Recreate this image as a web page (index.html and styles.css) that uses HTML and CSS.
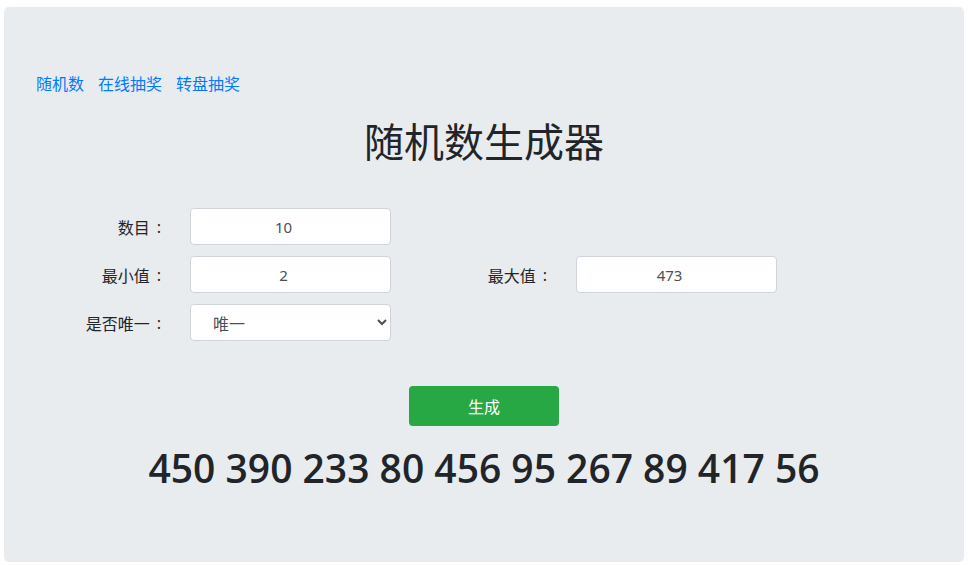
FILE: index.html
```html
<!DOCTYPE html>
<html>
<head>
	<title>随机数生成器</title>
	<link rel="stylesheet" href="styles.css">
</head>
<body>
	<div class="jumbotron">
		<nav class="links">
			<a href="#">随机数</a>
			<a href="#">在线抽奖</a>
			<a href="#">转盘抽奖</a>
		</nav>
		<h1>随机数生成器</h1>
		<form class="form">
			<label class="label" for="count">数目<span class="colon">:</span></label>
			<input class="field" id="count" type="text" value="10">
			<span></span><span></span>

			<label class="label" for="min">最小值<span class="colon">:</span></label>
			<input class="field" id="min" type="text" value="2">
			<label class="label" for="max">最大值<span class="colon">:</span></label>
			<input class="field" id="max" type="text" value="473">

			<label class="label" for="unique">是否唯一<span class="colon">:</span></label>
			<select class="field select" id="unique">
				<option>唯一</option>
				<option>不唯一</option>
			</select>
		</form>
		<div class="actions">
			<button class="btn" type="button">生成</button>
		</div>
		<p class="result">450 390 233 80 456 95 267 89 417 56</p>
	</div>
</body>
</html>
```

FILE: styles.css
```css
*{
	box-sizing: border-box;
}
body{
	margin: 0;
	padding: 7px 4px 3px 4px;
	background: #fff;
	font-family: "Noto Sans", "Noto Sans CJK SC", sans-serif;
	font-size: 16px;
	color: #212529;
}
.jumbotron{
	background: #e9ecef;
	border-radius: 5px;
	height: 555px;
	padding: 64px 32px 0 32px;
}
.links{
	display: flex;
	gap: 14px;
	line-height: 24px;
}
.links a{
	color: #007bff;
	text-decoration: none;
	font-family: "Noto Sans CJK SC", sans-serif;
	font-size: 16px;
}
h1{
	margin: 21px 0 0 0;
	text-align: center;
	font-family: "Noto Sans CJK SC", sans-serif;
	font-weight: 400;
	font-size: 40px;
	line-height: 48px;
}
.form{
	display: grid;
	grid-template-columns: 126px 201px 129px 201px;
	grid-auto-rows: 37px;
	column-gap: 28px;
	row-gap: 11px;
	margin-top: 44px;
}
.label{
	display: flex;
	justify-content: flex-end;
	align-items: center;
	height: 37px;
	padding-right: 1px;
	font-family: "Noto Sans CJK SC", sans-serif;
	font-size: 16px;
	line-height: 20px;
}
.colon{
	margin-left: 7px;
	font-family: "Noto Sans", sans-serif;
}
.field{
	height: 37px;
	width: 201px;
	border: 1px solid #ced4da;
	border-radius: 4px;
	background: #fff;
	color: #495057;
	font-family: "Noto Sans", "Noto Sans CJK SC", sans-serif;
	font-size: 15px;
	text-align: center;
	padding: 0 26px 0 12px;
}
.select{
	text-align: left;
	padding: 0 6px 0 18px;
	font-family: "Noto Sans CJK SC", sans-serif;
	font-size: 16px;
}
.actions{
	display: flex;
	justify-content: center;
	margin-top: 45px;
}
.btn{
	width: 150px;
	height: 40px;
	background: #28a745;
	color: #fff;
	border: none;
	border-radius: 4px;
	font-family: "Noto Sans CJK SC", sans-serif;
	font-size: 16px;
}
.result{
	margin: 18px 0 0 0;
	text-align: center;
	font-family: "Open Sans", sans-serif;
	font-weight: 600;
	font-size: 39px;
	line-height: 48px;
}
```
